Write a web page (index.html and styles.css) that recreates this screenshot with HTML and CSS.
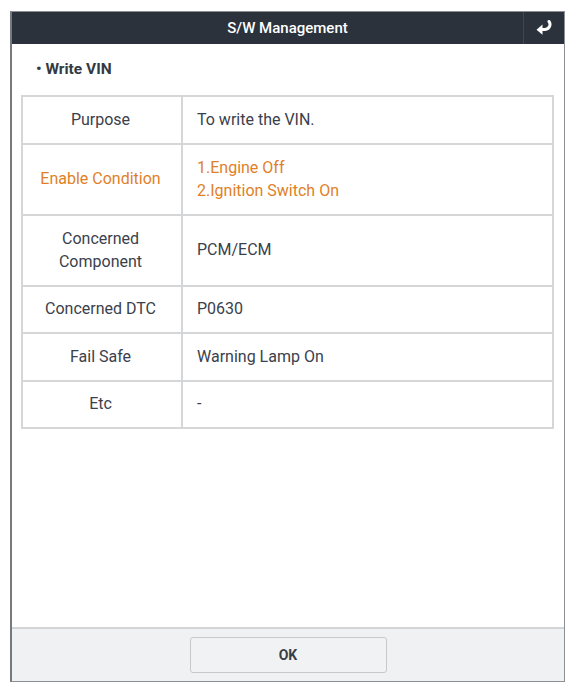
FILE: index.html
```html
<!DOCTYPE html>
<html>
<head>
<meta charset="utf-8">
<link rel="stylesheet" href="styles.css">
</head>
<body>
<div class="frame">
  <div class="header">
    <div class="title">S/W Management</div>
    <div class="back">
      <svg width="18" height="16" viewBox="0 0 18 16">
        <path d="M14 1.5 C16 4 15 9 10 9.5 H6" fill="none" stroke="#ffffff" stroke-width="3" stroke-linecap="round"/>
        <polygon points="1.5,9.7 7.5,4.5 7.5,14.7" fill="#ffffff"/>
      </svg>
    </div>
  </div>
  <div class="content">
    <div class="section">• Write VIN</div>
    <table class="info">
      <tr class="r48"><td class="k">Purpose</td><td class="v">To write the VIN.</td></tr>
      <tr class="r71 hl"><td class="k">Enable Condition</td><td class="v">1.Engine Off<br>2.Ignition Switch On</td></tr>
      <tr class="r71"><td class="k">Concerned<br>Component</td><td class="v">PCM/ECM</td></tr>
      <tr class="r47"><td class="k">Concerned DTC</td><td class="v">P0630</td></tr>
      <tr class="r48"><td class="k">Fail Safe</td><td class="v">Warning Lamp On</td></tr>
      <tr class="r47"><td class="k">Etc</td><td class="v">-</td></tr>
    </table>
  </div>
  <div class="footer">
    <button class="ok">OK</button>
  </div>
</div>
</body>
</html>
```
FILE: styles.css
```css
html, body {
  margin: 0;
  padding: 0;
  background: #ffffff;
}
body {
  font-family: Roboto, "Liberation Sans", sans-serif;
  color: #3a414c;
}
.frame {
  margin: 11px 0 0 10px;
  width: 552px;
  height: 669px;
  border: 1px solid #8c8f93;
  border-left: 2px solid #77797c;
  display: flex;
  flex-direction: column;
  background: #ffffff;
}
.header {
  height: 32px;
  background: #2b323c;
  display: flex;
  align-items: stretch;
  flex: none;
}
.title {
  flex: 1;
  color: #ffffff;
  font-weight: 500;
  font-size: 15px;
  display: flex;
  align-items: center;
  justify-content: center;
  padding-left: 40px;
}
.back {
  width: 40px;
  border-left: 1px solid #3f4751;
  display: flex;
  align-items: center;
  justify-content: center;
}
.content {
  flex: 1;
  padding: 0 9px 0 9px;
}
.section {
  font-size: 15.5px;
  font-weight: 700;
  margin: 16px 0 0 15px;
  height: 35px;
  color: #343a43;
}
.info {
  width: 533px;
  border-collapse: collapse;
  border: 2px solid #cfd1d4;
  font-size: 16px;
}
.info td {
  border: 2px solid #d4d6d8;
  padding: 0 0 2px 0;
  line-height: 23px;
}
.info td.k {
  width: 155px;
  text-align: center;
  padding-right: 3px;
}
.info td.v {
  padding-left: 14px;
  text-align: left;
}
.r48 { height: 48px; }
.r47 { height: 47px; }
.r71 { height: 71px; }
.hl td { color: #e07f28; }
.footer {
  flex: none;
  height: 52px;
  background: #f0f1f3;
  border-top: 2px solid #d2d5d8;
  display: flex;
  justify-content: center;
  align-items: flex-start;
}
.ok {
  margin-top: 8px;
  width: 197px;
  height: 36px;
  background: #f1f2f4;
  border: 1px solid #c5c8cc;
  border-radius: 3px;
  font-family: Roboto, "Liberation Sans", sans-serif;
  font-weight: 700;
  font-size: 14px;
  color: #3a3f46;
}
```
